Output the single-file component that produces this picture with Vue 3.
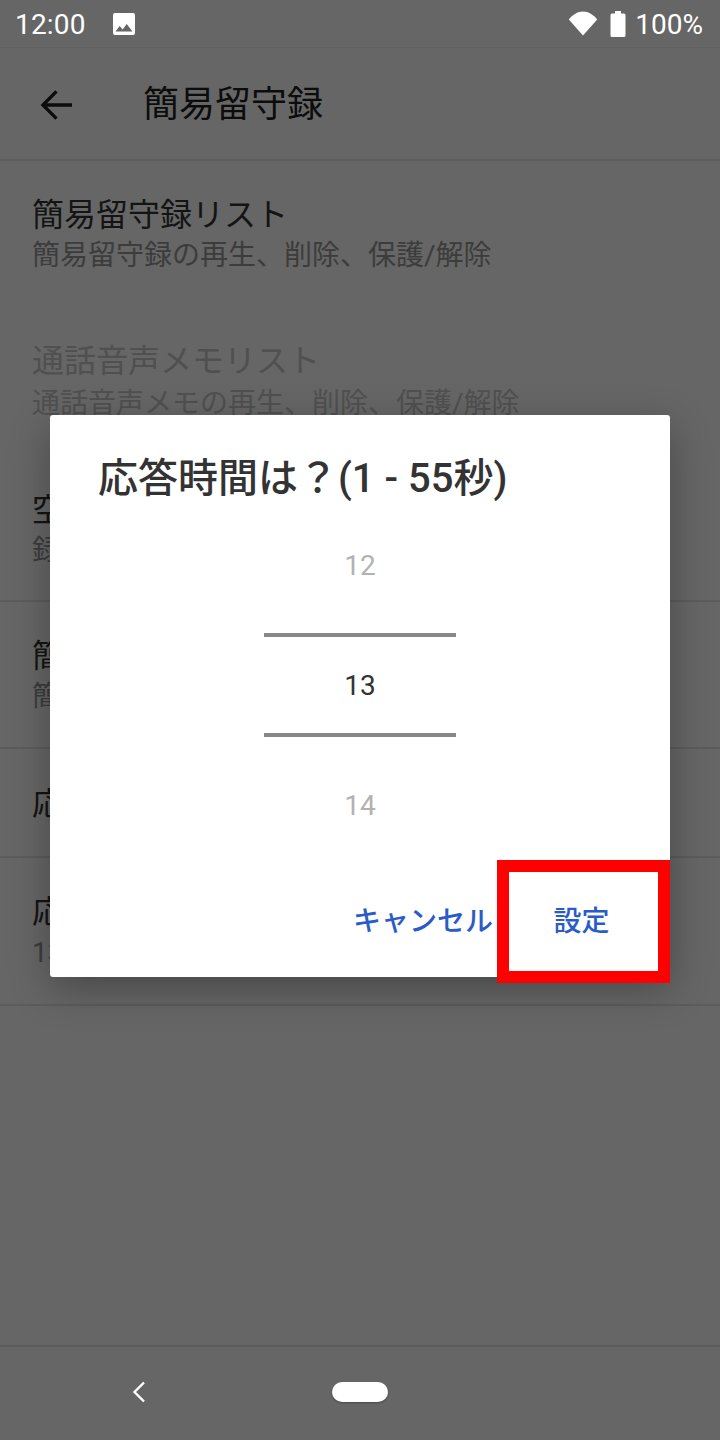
<script setup>
const rows = [
  { title: '簡易留守録リスト', sub: '簡易留守録の再生、削除、保護/解除', h: 147, pt: 32, noline: true },
  { title: '通話音声メモリスト', sub: '通話音声メモの再生、削除、保護/解除', h: 147, pt: 31, off: true, noline: true, gap: true },
  { title: '空き容量', sub: '録音可能な空き容量を確認します', h: 147, pt: 33 },
  { title: '簡易留守録の設定', sub: '簡易留守録の開始/停止を設定します', h: 147, pt: 32 },
  { title: '応答メッセージ', h: 109, pt: 2, single: true },
  { title: '応答時間', sub: '13秒', h: 148, pt: 32 },
]
</script>

<template>
  <div class="screen">
    <div class="status">
      <span class="clock">12:00</span>
      <svg class="pic" viewBox="0 0 24 24"><path fill="#fff" d="M3 1h18a2 2 0 0 1 2 2v18a2 2 0 0 1-2 2H3a2 2 0 0 1-2-2V3a2 2 0 0 1 2-2z"/><path fill="#666" d="M3.500 19.500l4.200-5.600 3 3.600 4-5.600 5.800 7.600z"/></svg>
      <span class="grow"></span>
      <svg class="wifi" viewBox="0 0 30 26"><path fill="#fff" d="M15 25.500 .8 9.500C4.500 5 9.500 1.500 15 1.500S25.500 5 29.200 9.500z"/></svg>
      <svg class="batt" viewBox="0 0 16 26"><path fill="#fff" d="M5 0h6v2.500h3a1.500 1.500 0 0 1 1.500 1.500v20.500A1.500 1.500 0 0 1 14 26H2a1.500 1.500 0 0 1-1.500-1.500V4A1.500 1.500 0 0 1 2 2.500h3z"/></svg>
      <span class="pct">100%</span>
    </div>
    <div class="toolbar">
      <svg class="back" viewBox="0 0 34 32"><path fill="none" stroke="#0c0c0c" stroke-width="3.400" d="M33 16H3M17 2 3 16l14 14"/></svg>
      <span class="heading">簡易留守録</span>
    </div>
    <div class="list">
      <div
        v-for="r in rows"
        :key="r.title"
        class="row"
        :class="{ off: r.off, noline: r.noline, single: r.single, gap: r.gap }"
        :style="{ height: r.h + 'px', paddingTop: r.pt + 'px' }"
      >
        <div class="t">{{ r.title }}</div>
        <div v-if="r.sub" class="s">{{ r.sub }}</div>
      </div>
    </div>
    <div class="grow"></div>
    <div class="nav">
      <svg class="navback" viewBox="0 0 14 22"><path fill="none" stroke="#fff" stroke-width="2.400" d="M12 1.500 2.500 11l9.500 9.500"/></svg>
      <span class="pill"></span>
    </div>

    <div class="dialog">
      <div class="dtitle">応答時間は？(1 - 55秒)</div>
      <div class="picker">
        <div class="num dim">12</div>
        <div class="num cur">13</div>
        <div class="num dim">14</div>
      </div>
      <div class="actions">
        <span class="btn">キャンセル</span>
        <span class="btn set">設定</span>
      </div>
    </div>
    <div class="mark"></div>
  </div>
</template>

<style>
html, body { margin: 0; background: #666; }
</style>

<style scoped>
.screen {
  position: relative;
  width: 720px;
  height: 1440px;
  overflow: hidden;
  background: #666;
  display: flex;
  flex-direction: column;
  font-family: Roboto, "Noto Sans CJK JP", sans-serif;
}
.grow { flex: 1; }
.status {
  height: 48px;
  box-sizing: border-box;
  border-bottom: 1px solid #606060;
  display: flex;
  align-items: center;
  padding: 2px 17px 0 15px;
  color: #fff;
  font-size: 28px;
}
.clock { width: 97px; letter-spacing: .2px; }
.pic { width: 24px; height: 24px; margin-top: -2px; }
.wifi { width: 30px; height: 26px; margin: -3px 12px 0 0; }
.batt { width: 16px; height: 26px; margin: -2px 9px 0 0; }
.toolbar {
  height: 113px;
  box-sizing: border-box;
  border-bottom: 2px solid #5e5e5e;
  display: flex;
  align-items: center;
  padding: 3px 0 0 40px;
}
.back { width: 33px; height: 32px; margin-right: 70px; }
.heading { font-size: 36px; color: #0c0c0c; line-height: 1; }
.row {
  box-sizing: border-box;
  padding-left: 32px;
  border-bottom: 2px solid #5c5c5c;
}
.row.noline { border-bottom: 0; }
.row.single { display: flex; align-items: center; }
.row.gap .s { margin-top: 2px; }
.t { font-size: 32px; line-height: 44px; color: #141414; }
.s { font-size: 28px; line-height: 38px; color: #3c3c3c; }
.off .t, .off .s { color: #505050; }
.nav {
  height: 95px;
  box-sizing: border-box;
  border-top: 2px solid #5c5c5c;
  display: flex;
  align-items: center;
  padding: 0 0 4px 132px;
}
.navback { width: 14px; height: 22px; margin-right: 186px; }
.pill {
  width: 56px;
  height: 20px;
  border-radius: 10px;
  background: #fff;
  box-shadow: 0 1px 2px rgba(0, 0, 0, .3);
}
.dialog {
  position: absolute;
  left: 50px;
  top: 415px;
  width: 620px;
  height: 562px;
  background: #fff;
  border-radius: 3px;
  box-shadow: 0 12px 40px rgba(0, 0, 0, .3);
  display: flex;
  flex-direction: column;
}
.dtitle {
  padding: 38px 0 0 48px;
  font-size: 40px;
  line-height: 52px;
  font-weight: 500;
  color: #333;
}
.picker {
  display: flex;
  flex-direction: column;
  align-items: center;
}
.num {
  position: relative;
  width: 192px;
  height: 120px;
  display: flex;
  align-items: center;
  justify-content: center;
  font-size: 28px;
}
.dim { color: #b2b2b2; }
.cur { color: #333; }
.cur::before,
.cur::after {
  content: "";
  position: absolute;
  left: 0;
  right: 0;
  height: 4px;
  background: #888;
}
.cur::before { top: 8px; }
.cur::after { bottom: 8px; }
.actions {
  margin-top: auto;
  height: 110px;
  display: flex;
  align-items: center;
  justify-content: flex-end;
}
.btn {
  font-size: 28px;
  font-weight: 500;
  color: #2a5bc8;
  line-height: 1;
}
.set { width: 177px; text-align: center; }
.mark {
  position: absolute;
  left: 497px;
  top: 860px;
  width: 173px;
  height: 123px;
  box-sizing: border-box;
  border: 12px solid #f00;
}
</style>
